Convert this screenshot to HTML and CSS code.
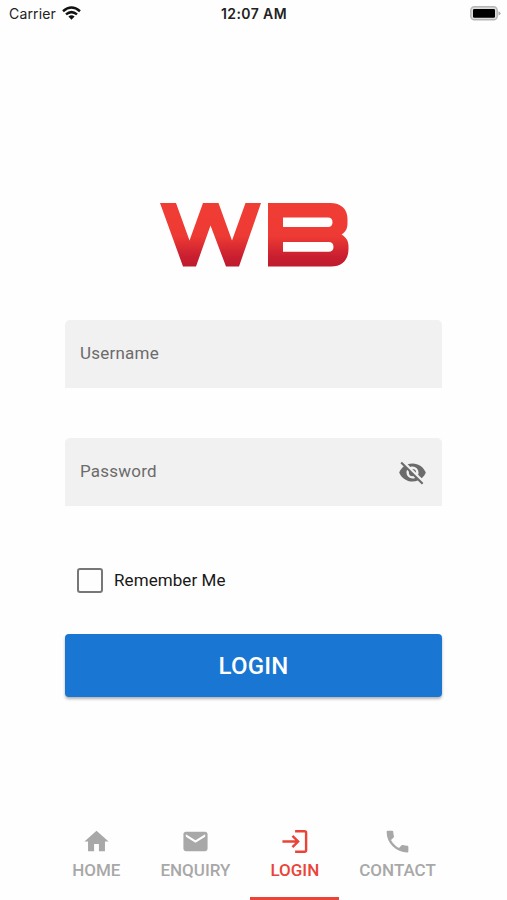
FILE: index.html
```html
<!DOCTYPE html>
<html lang="en">
<head>
<meta charset="utf-8">
<title>WB Login</title>
<link rel="stylesheet" href="styles.css">
</head>
<body>
<header class="status">
  <div class="carrier"><span>Carrier</span>
    <svg width="19" height="14" viewBox="0 0 19 14" fill="none" stroke="#111" stroke-width="2.5"><path d="M1 5.2Q9.500-2.200 18 5.200M4 8.400Q9.500 3.900 15 8.400"/><path d="M6.400 10.500Q9.500 8 12.600 10.500L9.500 13.700Z" fill="#111" stroke="none"/></svg>
  </div>
  <time>12:07 AM</time>
  <div class="power"><svg width="31" height="15" viewBox="0 0 31 15"><rect x=".8" y=".8" width="26.400" height="13" rx="3.600" fill="#ddd" stroke="#b5b5b5" stroke-width="1.400"/><rect x="3" y="3" width="22" height="8.800" rx="1.300"/><path d="M28.500 5.200Q30.500 6 30.500 7.300T28.500 9.400Z" fill="#aaa"/></svg></div>
</header>
<main>
  <svg class="logo" viewBox="0 0 190 66" role="img" aria-label="WB">
    <defs><linearGradient id="red" x1="0" y1="0" x2="0" y2="66" gradientUnits="userSpaceOnUse"><stop offset="0" stop-color="#f03d34"/><stop offset=".52" stop-color="#ee3a34"/><stop offset=".82" stop-color="#c91f30"/><stop offset="1" stop-color="#bb1b2e"/></linearGradient></defs>
    <path fill="url(#red)" d="M0 1H16L29.500 38.500 43 1H58.500L72 38.500 85.500 1H101L79 64.500H66L50.500 23.500 36 64.500H23Z"/>
    <path fill="url(#red)" fill-rule="evenodd" d="M108 1H170C181 1 187.500 7 187.500 17V21C187.500 26 186 30 181.500 32.500 186 35 188.500 39 188.500 44V47C188.500 58 182 64.500 171 64.500H108ZM123 15.500V25H168Q172.500 25 172.500 20.200 172.500 15.500 168 15.500ZM123 40V49.800H168.500Q173.500 49.800 173.500 45 173.500 40 168.500 40Z"/>
  </svg>
  <form>
    <label class="field"><span>Username</span></label>
    <label class="field password"><span>Password</span>
      <svg class="eye" viewBox="0 0 24 24"><path d="M11.830 9L15 12.160C15 12.110 15 12.050 15 12A3 3 0 0 0 12 9C11.940 9 11.890 9 11.830 9M7.530 9.800L9.080 11.350C9.030 11.560 9 11.770 9 12A3 3 0 0 0 12 15C12.220 15 12.440 14.970 12.650 14.920L14.200 16.470C13.530 16.800 12.790 17 12 17A5 5 0 0 1 7 12C7 11.210 7.200 10.470 7.530 9.800M2 4.270L4.280 6.550L4.730 7C3.080 8.300 1.780 10 1 12C2.730 16.390 7 19.500 12 19.500C13.550 19.500 15.030 19.200 16.380 18.660L16.810 19.080L19.730 22L21 20.730L3.270 3M12 7A5 5 0 0 1 17 12C17 12.640 16.870 13.260 16.640 13.820L19.570 16.750C21.070 15.500 22.270 13.860 23 12C21.270 7.610 17 4.500 12 4.500C10.600 4.500 9.260 4.750 8 5.200L10.170 7.350C10.740 7.130 11.350 7 12 7Z"/></svg>
    </label>
    <label class="remember"><i class="box"></i><span>Remember Me</span></label>
    <button type="button"><span>LOGIN</span></button>
  </form>
</main>
<nav>
  <a><svg viewBox="0 0 24 24"><path d="M10 20V14H14V20H19V12H22L12 3L2 12H5V20H10Z"/></svg><span>HOME</span></a>
  <a><svg viewBox="0 0 24 24"><path d="M20 8L12 13L4 8V6L12 11L20 6M20 4H4C2.890 4 2 4.890 2 6V18A2 2 0 0 0 4 20H20A2 2 0 0 0 22 18V6C22 4.890 21.100 4 20 4Z"/></svg><span>ENQUIRY</span></a>
  <a class="active"><svg viewBox="0 0 24 24"><path class="line" d="M12.500 3.500H20.300Q21.600 3.500 21.600 4.800V19.200Q21.600 20.500 20.300 20.500H12.500M2 12H14.500M10.300 7.300L15 12L10.300 16.700"/></svg><span>LOGIN</span></a>
  <a><svg viewBox="0 0 24 24"><path d="M6.620 10.790C8.060 13.620 10.380 15.940 13.210 17.380L15.410 15.180C15.690 14.900 16.080 14.820 16.430 14.930C17.550 15.300 18.750 15.500 20 15.500A1 1 0 0 1 21 16.500V20A1 1 0 0 1 20 21A17 17 0 0 1 3 4A1 1 0 0 1 4 3H7.500A1 1 0 0 1 8.500 4C8.500 5.250 8.700 6.450 9.070 7.570C9.180 7.920 9.100 8.310 8.820 8.590L6.620 10.790Z"/></svg><span>CONTACT</span></a>
</nav>
</body>
</html>
```
FILE: styles.css
```css
* { box-sizing: border-box; }
body {
  margin: 0;
  height: 900px;
  display: flex;
  flex-direction: column;
  background: #fefefe;
  font-family: Roboto, sans-serif;
  overflow: hidden;
}
svg { display: block; }
.status {
  height: 28px;
  display: grid;
  grid-template-columns: 1fr auto 1fr;
  align-items: center;
  padding: 0 6px 0 9px;
  font: 14px/28px Inter, sans-serif;
  color: #222;
}
.carrier { display: flex; align-items: center; gap: 6px; letter-spacing: .15px; }
.carrier svg { margin-top: -2px; }
.status time { font-weight: 600; letter-spacing: .4px; margin-right: 2px; }
.power { justify-self: end; margin-top: -2px; }
main { padding: 174px 65px 0; flex: 1; }
.logo { width: 190px; height: 66px; margin-left: 95px; }
form { padding-top: 51.5px; }
.field {
  display: flex;
  align-items: center;
  justify-content: space-between;
  height: 68px;
  padding: 0 15px;
  border-radius: 5px 5px 0 0;
  background: #f1f1f1;
  color: #6b6b6b;
  font-size: 17px;
  letter-spacing: .22px;
}
.field span { margin-top: -2px; }
.password { margin-top: 50.500px; }
.eye { width: 29px; height: 29px; fill: #6b6b6b; }
.remember {
  display: flex;
  align-items: center;
  gap: 12px;
  margin: 62px 0 0 12px;
  height: 25px;
  font-size: 17px;
  letter-spacing: .08px;
  color: #181818;
}
.remember span { margin-top: -2px; }
.box { width: 26px; height: 25px; border: 2px solid #777; border-radius: 3px; }
.remember { gap: 11px; }
button {
  display: block;
  width: 100%;
  height: 63px;
  margin-top: 41px;
  padding: 0;
  border: 0;
  border-radius: 4px;
  background: #1976d2;
  color: #fff;
  font: 500 24px Roboto, sans-serif;
  letter-spacing: .2px;
  box-shadow: 0 2px 3px rgba(0, 0, 0, .3);
}
nav { display: flex; justify-content: center; height: 82px; padding-left: 1px; }
nav a {
  display: flex;
  flex-direction: column;
  align-items: center;
  padding: 9px 20px 0;
  color: #a8a8a8;
  font-size: 17px;
  font-weight: 500;
  line-height: 20px;
  border-bottom: 3px solid transparent;
}
nav svg { width: 29px; height: 29px; margin-bottom: 4px; fill: currentColor; }
nav .active { color: #ea4338; border-color: #ea4338; }
nav .line { fill: none; stroke: currentColor; stroke-width: 2; }
```
